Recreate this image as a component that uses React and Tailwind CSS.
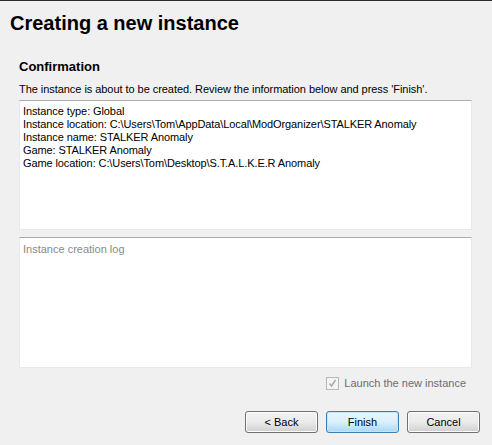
import React from 'react';

const font = { fontFamily: '"Liberation Sans", Arial, sans-serif' };

const WinButton = ({ children, primary }) => (
  <button
    className={
      primary
        ? 'w-[73px] h-[22px] rounded-[3px] border border-[#3c7fb1] bg-gradient-to-b from-[#eaf6fd] via-[#d9f0fc] to-[#a7d9f5] text-[11px] text-black shadow-[inset_0_0_0_1px_#c4e5f6]'
        : 'w-[73px] h-[22px] rounded-[3px] border border-[#707070] bg-gradient-to-b from-[#f2f2f2] via-[#ebebeb] to-[#cfcfcf] text-[11px] text-black shadow-[inset_0_0_0_1px_#fcfcfc]'
    }
  >
    {children}
  </button>
);

const App = () => {
  return (
    <div
      className="w-[492px] h-[445px] bg-[#f0f0f0] border-t border-[#2b2b2b] overflow-hidden text-black"
      style={font}
    >
      {/* Header */}
      <div className="pl-[10px] pt-[10px] h-[58px]">
        <h1 className="text-[20px] leading-[24px] font-bold">Creating a new instance</h1>
      </div>

      <div className="px-[19px] pr-[20px]">
        <h2 className="text-[13px] leading-[16px] font-bold">Confirmation</h2>
        <p className="text-[11px] leading-[13px] mt-[8px] tracking-[-0.05px]">
          The instance is about to be created. Review the information below and press 'Finish'.
        </p>

        {/* Summary box */}
        <div className="mt-[4px] h-[130px] bg-white border border-[#e3e9ef] border-t-[#abadb3] px-[3px] pt-[4px] text-[11px] leading-[13px] tracking-[-0.1px]">
          <div>Instance type: Global</div>
          <div>Instance location: C:\Users\Tom\AppData\Local\ModOrganizer\STALKER Anomaly</div>
          <div>Instance name: STALKER Anomaly</div>
          <div>Game: STALKER Anomaly</div>
          <div>Game location: C:\Users\Tom\Desktop\S.T.A.L.K.E.R Anomaly</div>
        </div>

        {/* Log box */}
        <div className="mt-[7px] h-[131px] bg-white border border-[#e3e9ef] border-t-[#abadb3] px-[3px] pt-[5px] text-[11px] leading-[13px] text-[#8a8a8a]">
          Instance creation log
        </div>

        {/* Launch checkbox */}
        <div className="flex justify-end items-center gap-[5px] mt-[9px] pr-[6px] h-[13px]">
          <div className="w-[13px] h-[13px] border border-[#b8b8b8] bg-[#f4f4f4] flex items-center justify-center">
            <svg width="9" height="9" viewBox="0 0 9 9">
              <path d="M1.5 4.5 L3.5 7 L7.5 1" fill="none" stroke="#a8a8a8" strokeWidth="1.5" />
            </svg>
          </div>
          <span className="text-[11px] leading-[13px] text-[#6d6d6d]">Launch the new instance</span>
        </div>
      </div>

      {/* Buttons */}
      <div className="flex justify-end gap-[8px] pr-[12px] mt-[21px]">
        <WinButton>&lt; Back</WinButton>
        <WinButton primary>Finish</WinButton>
        <WinButton>Cancel</WinButton>
      </div>
    </div>
  );
};

export default App;
